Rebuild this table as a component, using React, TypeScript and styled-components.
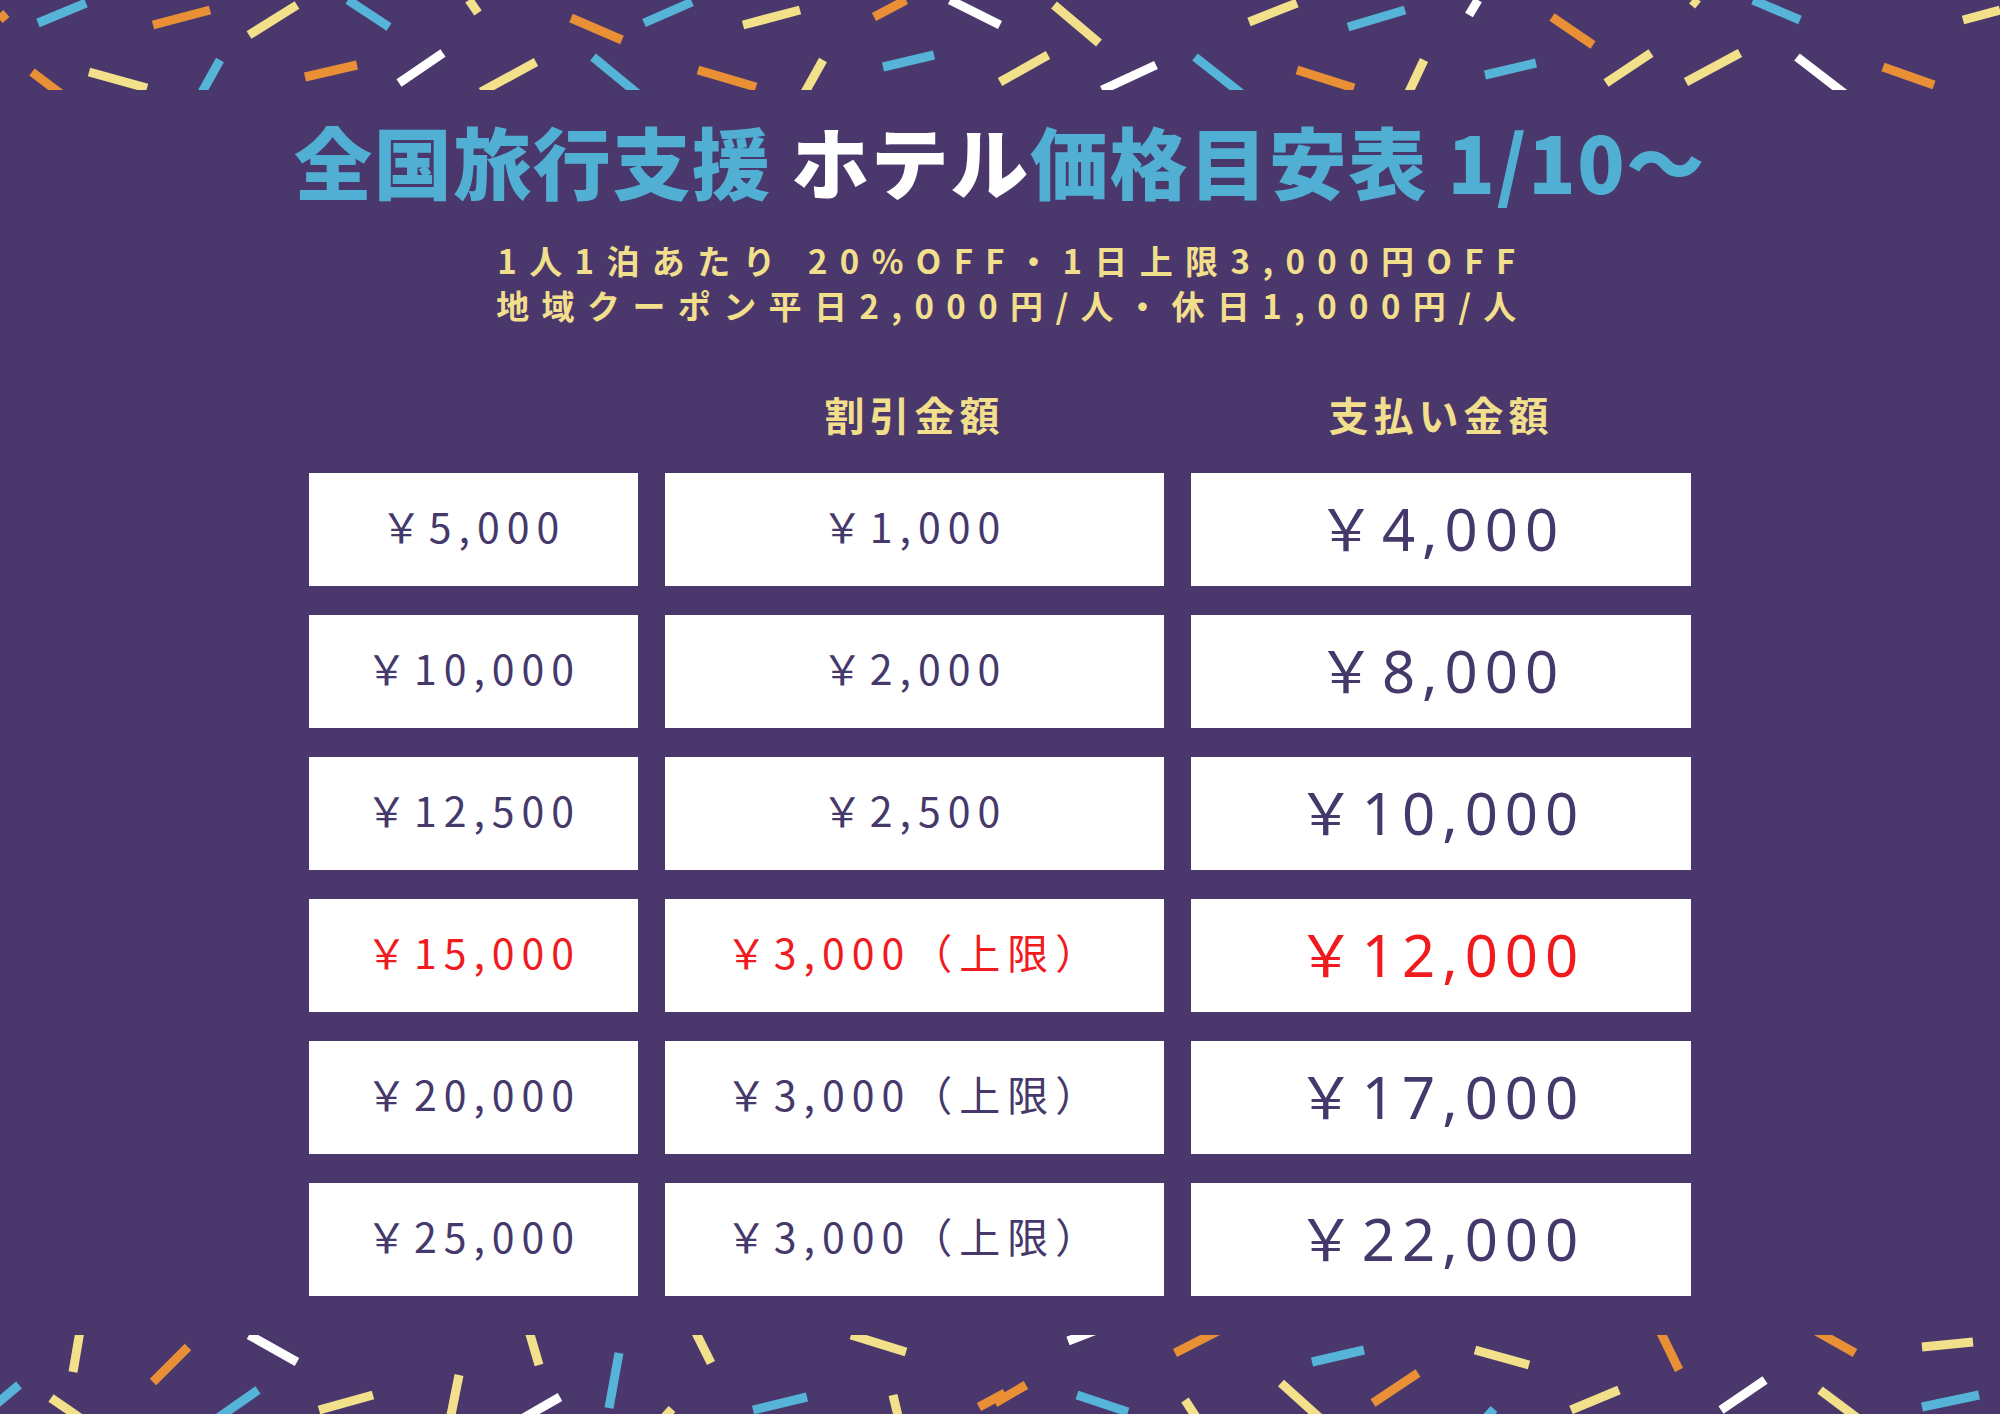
import React from 'react'
import styled, { createGlobalStyle } from 'styled-components'

const GlobalStyle = createGlobalStyle`
  html, body {
    margin: 0;
    padding: 0;
  }
  body {
    background-color: #4a386c;
    font-family: "Noto Sans CJK JP", "Noto Sans", sans-serif;
  }
`

type Piece = [number, number, number, number, string]

const BL = '#56b4d8'
const OR = '#e98f36'
const YE = '#f2e08a'
const WH = '#ffffff'

// confetti along the top edge (x1, y1, x2, y2, colour)
const topPieces: Piece[] = [
  [38, 23, 86, 3, BL], [153, 25, 210, 10, OR], [249, 35, 297, 5, YE], [348, 0, 389, 27, BL],
  [469, 0, 478, 13, YE], [571, 18, 622, 40, OR], [644, 23, 692, 2, BL], [743, 25, 800, 10, YE],
  [874, 17, 906, 0, OR], [950, 0, 1000, 25, WH], [0, 13, 6, 20, OR], [32, 72, 61, 94, OR],
  [89, 72, 147, 88, YE], [201, 94, 220, 60, BL], [305, 77, 357, 65, OR], [399, 83, 443, 53, WH],
  [481, 92, 536, 62, YE], [593, 57, 638, 94, BL], [698, 70, 756, 87, OR], [804, 94, 823, 60, YE],
  [883, 67, 934, 55, BL], [1054, 5, 1099, 43, YE], [1249, 22, 1297, 3, YE], [1348, 27, 1405, 10, BL],
  [1469, 15, 1478, 0, WH], [1552, 17, 1593, 45, OR], [1692, 0, 1698, 5, YE], [1753, 0, 1800, 20, BL],
  [1963, 20, 2000, 10, YE], [1000, 82, 1048, 55, YE], [1102, 90, 1156, 65, WH], [1195, 57, 1242, 94, BL],
  [1297, 70, 1354, 88, OR], [1408, 94, 1424, 60, YE], [1485, 75, 1536, 63, BL], [1606, 83, 1651, 53, YE],
  [1686, 82, 1740, 53, YE], [1797, 57, 1845, 94, WH], [1883, 67, 1934, 85, OR],
]

// confetti along the bottom edge, y measured from the top of the band
const bottomPieces: Piece[] = [
  [80, -4, 73, 37, YE], [188, 12, 153, 47, OR], [249, 0, 297, 27, WH], [19, 50, -5, 70, BL],
  [51, 63, 83, 85, YE], [258, 55, 215, 85, BL], [319, 75, 373, 60, YE], [459, 40, 450, 85, YE],
  [529, -4, 539, 30, YE], [560, 62, 520, 85, WH], [619, 18, 609, 73, BL], [695, -4, 711, 28, YE],
  [851, 0, 906, 17, YE], [753, 75, 807, 62, BL], [893, 60, 899, 85, YE], [979, 72, 1005, 58, OR],
  [1068, 6, 1099, -6, WH], [1175, 18, 1218, -4, OR], [1312, 27, 1364, 15, BL], [1475, 15, 1529, 30, YE],
  [1660, -4, 1679, 35, OR], [1816, -4, 1855, 18, OR], [1922, 12, 1973, 7, YE], [995, 68, 1026, 50, OR],
  [1077, 60, 1128, 77, BL], [1185, 65, 1198, 85, YE], [1281, 48, 1322, 85, YE], [1373, 68, 1418, 38, OR],
  [1484, 85, 1494, 74, BL], [1571, 75, 1619, 55, YE], [1721, 75, 1765, 45, WH], [1820, 55, 1860, 85, YE],
  [1922, 72, 1979, 60, BL], [662, 85, 672, 74, YE],
]

type Row = { price: string; discount: string; pay: string; red?: boolean }

const rows: Row[] = [
  { price: '￥5,000', discount: '￥1,000', pay: '￥4,000' },
  { price: '￥10,000', discount: '￥2,000', pay: '￥8,000' },
  { price: '￥12,500', discount: '￥2,500', pay: '￥10,000' },
  { price: '￥15,000', discount: '￥3,000（上限）', pay: '￥12,000', red: true },
  { price: '￥20,000', discount: '￥3,000（上限）', pay: '￥17,000' },
  { price: '￥25,000', discount: '￥3,000（上限）', pay: '￥22,000' },
]

const Confetti = ({ pieces, height, bottom }: { pieces: Piece[]; height: number; bottom?: boolean }) => (
  <Band $height={height} $bottom={bottom}>
    <svg width="2000" height={height} viewBox={`0 0 2000 ${height}`}>
      {pieces.map(([x1, y1, x2, y2, c], i) => (
        <line key={i} x1={x1} y1={y1} x2={x2} y2={y2} stroke={c} strokeWidth={9} />
      ))}
    </svg>
  </Band>
)

const App = () => {
  return (
    <Page>
      <GlobalStyle />
      <Confetti pieces={topPieces} height={90} />
      <Title>
        全国旅行支援 <White>ホテル</White>価格目安表 1/10～
      </Title>
      <Sub>
        <div>1人1泊あたり 20%OFF・1日上限3,000円OFF</div>
        <div>地域クーポン平日2,000円/人・休日1,000円/人</div>
      </Sub>
      <Table>
        <Head />
        <Head>割引金額</Head>
        <Head>支払い金額</Head>
        {rows.map((r) => (
          <React.Fragment key={r.price}>
            <Cell $red={r.red}>{r.price}</Cell>
            <Cell $red={r.red}>{r.discount}</Cell>
            <Cell $red={r.red} $big>{r.pay}</Cell>
          </React.Fragment>
        ))}
      </Table>
      <Confetti pieces={bottomPieces} height={79} bottom />
    </Page>
  )
}

export default App

const Page = styled.div`
  width: 2000px;
  height: 1414px;
  overflow: hidden;
  background-color: #4a386c;
  display: flex;
  flex-direction: column;
  align-items: center;
`
const Band = styled.div<{ $height: number; $bottom?: boolean }>`
  width: 2000px;
  height: ${(p) => p.$height}px;
  margin-top: ${(p) => (p.$bottom ? 'auto' : '0')};
  overflow: hidden;
  flex-shrink: 0;
  svg {
    display: block;
  }
`
const Title = styled.h1`
  margin: 20px 0 0;
  height: 100px;
  line-height: 100px;
  font-size: 78px;
  font-weight: 900;
  color: #52afd4;
  white-space: nowrap;
  letter-spacing: 1.6px;
`
const White = styled.span`
  color: #ffffff;
`
const Sub = styled.div`
  margin-top: 28px;
  padding-left: 25px;
  font-size: 33px;
  line-height: 45px;
  font-weight: 700;
  color: #f2df8c;
  letter-spacing: 12.4px;
  text-align: center;
  white-space: nowrap;
`
const Table = styled.div`
  margin-top: 64px;
  display: grid;
  grid-template-columns: 329px 499px 500px;
  grid-template-rows: 52px;
  grid-auto-rows: 113px;
  column-gap: 27px;
  row-gap: 29px;
`
const Head = styled.div`
  display: flex;
  justify-content: center;
  align-items: center;
  padding-bottom: 8px;
  font-size: 40px;
  font-weight: 700;
  letter-spacing: 5px;
  color: #f2df8c;
`
const Cell = styled.div<{ $red?: boolean; $big?: boolean }>`
  background-color: #ffffff;
  display: flex;
  justify-content: center;
  align-items: center;
  padding-bottom: ${(p) => (p.$big ? '8px' : '10px')};
  box-sizing: border-box;
  color: ${(p) => (p.$red ? '#f01b1f' : '#45386a')};
  font-family: ${(p) =>
    p.$big ? '"Noto Sans", "Noto Sans CJK JP", sans-serif' : '"Noto Sans CJK JP", sans-serif'};
  font-size: ${(p) => (p.$big ? '58px' : '41px')};
  letter-spacing: 7px;
  white-space: nowrap;
`
